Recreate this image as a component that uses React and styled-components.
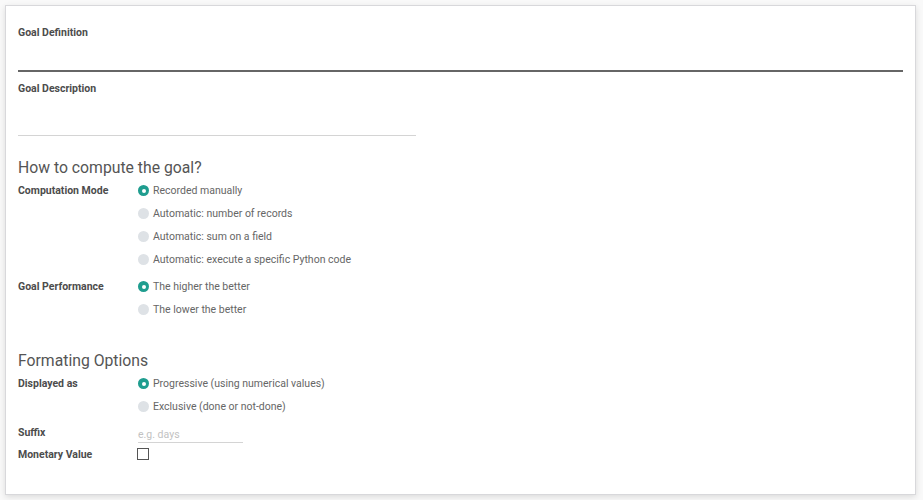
import React from "react";
import styled, { createGlobalStyle } from "styled-components";

const Global = createGlobalStyle`
  html, body { margin: 0; padding: 0; background: #f9f9f9; }
  body { font-family: Roboto, "Noto Sans", sans-serif; font-size: 10.5px; color: #4c4c4c; }
  * { box-sizing: border-box; }
`;

const Page = styled.div`
  padding: 5px 7px 6px 5px;
  width: 923px;
  height: 500px;
`;

const Sheet = styled.div`
  background: #fff;
  border: 1px solid #d8d8db;
  box-shadow: 0 2px 6px rgba(0, 0, 0, 0.12);
  height: 490px;
  padding: 18px 12px 0 12px;
`;

const FieldLabel = styled.div`
  font-weight: 700;
  font-size: 10.5px;
  line-height: 18px;
  color: #4c4c4c;
  margin-top: ${(p) => p.$mt || 0}px;
`;

const TitleInput = styled.div`
  height: 30px;
  border-bottom: 2px solid #666666;
`;

const DescInput = styled.div`
  width: 398px;
  height: 38px;
  border-bottom: 1px solid #d4d4d4;
`;

const Heading = styled.div`
  font-size: 15.75px;
  line-height: 22px;
  color: #555;
  margin-top: ${(p) => p.$mt}px;
`;

const Row = styled.div`
  display: grid;
  grid-template-columns: 120px 1fr;
  margin-top: ${(p) => p.$mt || 0}px;
`;

const RowLabel = styled.div`
  font-weight: 700;
  font-size: 10.5px;
  line-height: ${(p) => p.$lh || 23}px;
  color: #4c4c4c;
`;

const Options = styled.div`
  display: flex;
  flex-direction: column;
`;

const Option = styled.div`
  display: flex;
  align-items: center;
  gap: 4px;
  height: 23px;
  font-size: 10.5px;
  color: #666;
`;

const Radio = styled.span`
  width: 11px;
  height: 11px;
  flex: none;
  border-radius: 50%;
  background: ${(p) => (p.$checked ? "#1f9d8f" : "#dee2e6")};
  display: flex;
  align-items: center;
  justify-content: center;
  &::after {
    content: "";
    display: ${(p) => (p.$checked ? "block" : "none")};
    width: 4px;
    height: 4px;
    border-radius: 50%;
    background: #fff;
  }
`;

const SuffixInput = styled.div`
  width: 105px;
  height: 20px;
  border-bottom: 1px solid #d4d4d4;
  color: #c2c2c2;
  font-size: 10.5px;
  line-height: 23px;
`;

const CheckCell = styled.div`
  height: 23px;
  display: flex;
  align-items: center;
`;

const Checkbox = styled.span`
  width: 12px;
  height: 12px;
  border: 1px solid #555;
  margin-left: -1px;
  margin-top: -1px;
`;

const RadioGroup = ({ items, checked = 0 }) => (
  <Options>
    {items.map((t, i) => (
      <Option key={t}>
        <Radio $checked={i === checked} />
        {t}
      </Option>
    ))}
  </Options>
);

export default function App() {
  return (
    <>
      <Global />
      <Page>
        <Sheet>
          <FieldLabel>Goal Definition</FieldLabel>
          <TitleInput />
          <FieldLabel $mt={8}>Goal Description</FieldLabel>
          <DescInput />
          <Heading $mt={21}>How to compute the goal?</Heading>
          <Row>
            <RowLabel>Computation Mode</RowLabel>
            <RadioGroup
              items={[
                "Recorded manually",
                "Automatic: number of records",
                "Automatic: sum on a field",
                "Automatic: execute a specific Python code",
              ]}
            />
          </Row>
          <Row $mt={4}>
            <RowLabel>Goal Performance</RowLabel>
            <RadioGroup items={["The higher the better", "The lower the better"]} />
          </Row>
          <Heading $mt={29}>Formating Options</Heading>
          <Row>
            <RowLabel>Displayed as</RowLabel>
            <RadioGroup
              items={["Progressive (using numerical values)", "Exclusive (done or not-done)"]}
            />
          </Row>
          <Row $mt={5}>
            <RowLabel $lh={20}>Suffix</RowLabel>
            <SuffixInput>e.g. days</SuffixInput>
          </Row>
          <Row>
            <RowLabel>Monetary Value</RowLabel>
            <CheckCell>
              <Checkbox />
            </CheckCell>
          </Row>
        </Sheet>
      </Page>
    </>
  );
}
